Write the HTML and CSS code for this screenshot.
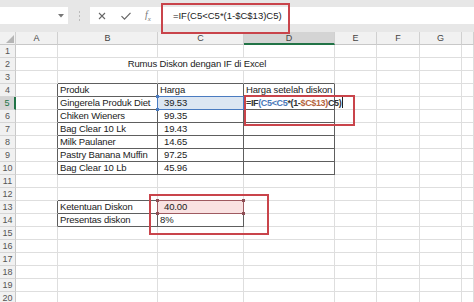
FILE: index.html
```html
<!DOCTYPE html>
<html>
<head>
<meta charset="utf-8">
<link rel="stylesheet" href="styles.css">
</head>
<body>
<div class="app">
  <div class="fbar">
    <div class="namebox">
      <svg class="dd" width="6" height="4" viewBox="0 0 6 4"><path d="M0 0H6L3 3.5Z" fill="#777"/></svg>
    </div>
    <div class="grip"><i></i><i></i><i></i></div>
    <div class="finput">
      <svg class="ic" width="10" height="10" viewBox="0 0 10 10"><path d="M2 2L8 8M8 2L2 8" stroke="#666" stroke-width="1.1" fill="none"/></svg>
      <svg class="ic ok" width="12" height="10" viewBox="0 0 12 10"><path d="M1.5 5.2L4.5 8.2L10.5 1.8" stroke="#666" stroke-width="1.2" fill="none"/></svg>
      <span class="fx">f<sub>x</sub></span>
      <span class="ftext">=IF(C5&lt;C5*(1-$C$13)C5)</span>
    </div>
  </div>

  <div class="sheet">
    <div class="corner"><svg width="8" height="8" viewBox="0 0 8 8"><path d="M8 0V8H0Z" fill="#b5b5b5"/></svg></div>
    <div class="ch">A</div><div class="ch">B</div><div class="ch">C</div><div class="ch sel">D</div><div class="ch">E</div><div class="ch">F</div><div class="ch">G</div><div class="ch"></div>

    <div class="rh">1</div><div></div><div></div><div></div><div></div><div></div><div></div><div></div><div></div>
    <div class="rh">2</div><div></div><div class="title">Rumus Diskon dengan IF di Excel</div><div></div><div></div><div></div><div></div>
    <div class="rh">3</div><div></div><div class="db"></div><div class="db"></div><div class="db"></div><div></div><div></div><div></div><div></div>
    <div class="rh">4</div><div class="dr"></div><div class="dr db">Produk</div><div class="dr db">Harga</div><div class="dr db">Harga setelah diskon</div><div></div><div></div><div></div><div></div>
    <div class="rh selr">5</div><div class="dr"></div><div class="dr db">Gingerela Produk Diet</div><div class="dr db num ref blue"><span class="h tl"></span><span class="h bl"></span>39.53</div><div class="dr db edit">=IF<span class="cb">(C5&lt;C5</span>*(1-<span class="cr">$C$13</span><span class="cr">)</span>C5)<span class="caret"></span></div><div></div><div></div><div></div><div></div>
    <div class="rh">6</div><div class="dr"></div><div class="dr db">Chiken Wieners</div><div class="dr db num">99.35</div><div class="dr db"></div><div></div><div></div><div></div><div></div>
    <div class="rh">7</div><div class="dr"></div><div class="dr db">Bag Clear 10 Lk</div><div class="dr db num">19.43</div><div class="dr db"></div><div></div><div></div><div></div><div></div>
    <div class="rh">8</div><div class="dr"></div><div class="dr db">Milk Paulaner</div><div class="dr db num">14.65</div><div class="dr db"></div><div></div><div></div><div></div><div></div>
    <div class="rh">9</div><div class="dr"></div><div class="dr db">Pastry Banana Muffin</div><div class="dr db num">97.25</div><div class="dr db"></div><div></div><div></div><div></div><div></div>
    <div class="rh">10</div><div class="dr"></div><div class="dr db">Bag Clear 10 Lb</div><div class="dr db num">45.96</div><div class="dr db"></div><div></div><div></div><div></div><div></div>
    <div class="rh">11</div><div></div><div></div><div></div><div></div><div></div><div></div><div></div><div></div>
    <div class="rh">12</div><div></div><div class="db"></div><div></div><div></div><div></div><div></div><div></div><div></div>
    <div class="rh">13</div><div class="dr"></div><div class="dr db">Ketentuan Diskon</div><div class="dr num ref red"><span class="h tl"></span><span class="h bl"></span><span class="h tr"></span><span class="h br"></span>40.00</div><div></div><div></div><div></div><div></div><div></div>
    <div class="rh">14</div><div class="dr"></div><div class="dr db">Presentas diskon</div><div class="dr db">8%</div><div></div><div></div><div></div><div></div><div></div>
    <div class="rh">15</div><div></div><div></div><div></div><div></div><div></div><div></div><div></div><div></div>
    <div class="rh">16</div><div></div><div></div><div></div><div></div><div></div><div></div><div></div><div></div>
    <div class="rh">17</div><div></div><div></div><div></div><div></div><div></div><div></div><div></div><div></div>
    <div class="rh">18</div><div></div><div></div><div></div><div></div><div></div><div></div><div></div><div></div>
    <div class="rh">19</div><div></div><div></div><div></div><div></div><div></div><div></div><div></div><div></div>
    <div class="rh">20</div><div></div><div></div><div></div><div></div><div></div><div></div><div></div><div></div>
  </div>

  <div class="mark m1"></div>
  <div class="mark m2"></div>
  <div class="mark m3"></div>
</div>
</body>
</html>
```
FILE: styles.css
```css
* { box-sizing: border-box; }
html, body { margin: 0; padding: 0; background: #fff; }
body {
  width: 474px; height: 302px; overflow: hidden;
  font-family: "Liberation Sans", Arial, sans-serif;
  color: #222;
}
.app { position: relative; width: 474px; height: 302px; overflow: hidden; }

.fbar {
  height: 32px; background: #e7e7e7;
  display: flex; align-items: flex-start; padding-top: 7px;
}
.namebox {
  width: 68px; height: 17px; background: #fff;
  display: flex; align-items: center; justify-content: flex-end; padding-right: 4px;
}
.grip {
  width: 22px; height: 17px;
  display: flex; flex-direction: column; align-items: center; justify-content: center; gap: 2px;
}
.grip i { display: block; width: 1px; height: 2px; background: #bbb; }
.finput {
  flex: 1; height: 17px; background: #fff;
  display: flex; align-items: center; padding-left: 7px;
}
.ic { margin-right: 13px; }
.ok { margin-right: 13px; }
.fx {
  font-family: "Liberation Serif", serif; font-style: italic; font-size: 10px; color: #777;
  margin-right: 22px;
}
.fx sub { font-size: 7px; }
.ftext { font-size: 9.5px; color: #222; letter-spacing: 0; }

.sheet {
  display: grid;
  grid-template-columns: 16px 42px 100px 86px 91px 42px 43px 42px 12px;
  grid-auto-rows: 13px;
  font-size: 9.5px; line-height: 12px; letter-spacing: -0.15px;
}
.sheet > div {
  border-right: 1px solid #dedede;
  border-bottom: 1px solid #dedede;
  padding-left: 2px;
  white-space: nowrap; overflow: visible;
  position: relative;
}
.sheet > .ch, .sheet > .corner {
  background: #f1f1f1; color: #444; text-align: center; padding-left: 0;
  border-right-color: #d0d0d0; border-bottom-color: #c8c8c8;
  font-size: 9px; letter-spacing: 0;
}
.corner { display: flex; align-items: flex-end; justify-content: flex-end; padding: 0 1px 1px 0 !important; }
.corner svg { display: block; }
.sheet > .rh {
  background: #f1f1f1; color: #555; text-align: center; padding-left: 0;
  border-right-color: #c8c8c8; border-bottom-color: #d6d6d6;
  font-size: 9px; letter-spacing: 0;
}
.sheet > .ch.sel { background: #d4d4d4; border-bottom: 2px solid #217346; }
.sheet > .rh.selr { background: #d4d4d4; color: #217346; border-right: 2px solid #217346; }

.sheet > .title { grid-column: span 3; text-align: center; }
.sheet > .dr { border-right-color: #5e5e5e; }
.sheet > .db { border-bottom-color: #5e5e5e; }
.sheet > .num { padding-left: 6px; }

.ref::after { content: ""; position: absolute; left: -1px; top: -1px; right: -1px; bottom: -1px; border: 1px solid; pointer-events: none; }
.sheet > .blue { background: #dce6f2; }
.blue::after { border-color: #4a7bc0; }
.sheet > .red { background: #f9e2e2; }
.red::after { border-color: #9e5a60; }
.h { position: absolute; width: 3px; height: 3px; z-index: 2; }
.blue .h { background: #4a7bc0; }
.red .h { background: #8e4e55; }
.h.tl { left: -2px; top: -2px; }
.h.bl { left: -2px; bottom: -2px; }
.h.tr { right: -2px; top: -2px; }
.h.br { right: -2px; bottom: -2px; }

.sheet > .edit { font-weight: bold; color: #333; font-size: 9px; letter-spacing: -0.35px; }
.cb { color: #4a78b8; }
.cr { color: #b5653e; }
.caret { display: inline-block; width: 1px; height: 11px; background: #222; vertical-align: -2px; margin-left: 1px; }

.mark { position: absolute; border: 2px solid #c9444b; pointer-events: none; }
.m1 { left: 161px; top: 3px; width: 129px; height: 31px; }
.m2 { left: 244px; top: 95px; width: 111px; height: 31px; }
.m3 { left: 149px; top: 194px; width: 120px; height: 41px; }
```
